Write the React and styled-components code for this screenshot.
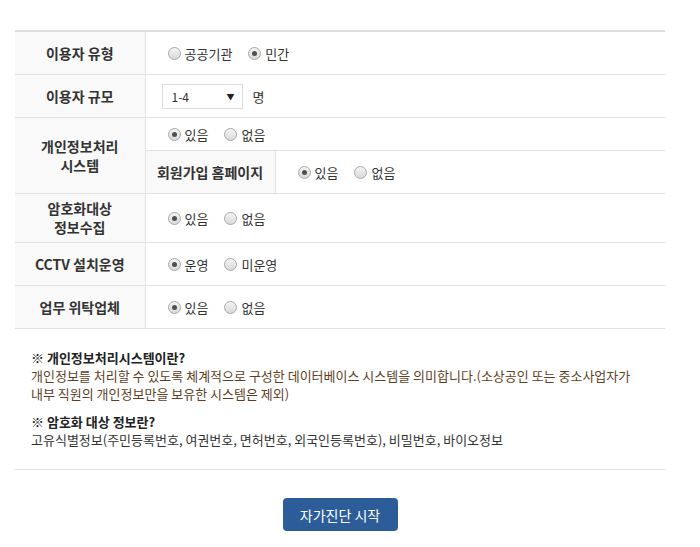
import React, { useState } from "react";
import styled, { createGlobalStyle } from "styled-components";

const GlobalStyle = createGlobalStyle`
  body {
    margin: 0;
    background: #fff;
    font-family: "Noto Sans CJK KR", "Noto Sans", sans-serif;
    color: #333;
  }
`;

const Wrap = styled.div`
  padding: 30px 35px 0 15px;
`;

const Table = styled.table`
  width: 100%;
  border-collapse: collapse;
  border-top: 2px solid #ddd;
  border-bottom: 1px solid #e2e2e2;

  tr + tr > td,
  tr + tr > th {
    border-top: 1px solid #e2e2e2;
  }
`;

const Label = styled.th`
  width: 130px;
  box-sizing: border-box;
  background: #f9f9f9;
  border-right: 1px solid #e2e2e2;
  font-size: 14px;
  font-weight: 700;
  line-height: 19px;
  color: #333;
  text-align: center;
  padding: 0 4px;
  white-space: nowrap;
  height: ${(p) => p.$h || 42}px;
`;

const Value = styled.td`
  padding: 0 0 0 ${(p) => p.$pad || 22}px;
  height: ${(p) => p.$h || 42}px;
  font-size: 13px;
  vertical-align: middle;
`;

const Options = styled.div`
  display: flex;
  align-items: center;
  gap: 16px;
`;

const Option = styled.label`
  display: inline-flex;
  align-items: center;
  gap: 4px;
  font-size: 13px;
  color: #333;
  cursor: pointer;
`;

const Radio = styled.input.attrs({ type: "radio" })`
  appearance: none;
  margin: 0;
  width: 13px;
  height: 13px;
  border-radius: 50%;
  border: 1px solid #a9a9a9;
  background: linear-gradient(#f4f4f4, #d9d9d9);
  box-sizing: border-box;
  display: grid;
  place-items: center;

  &:checked::after {
    content: "";
    width: 5px;
    height: 5px;
    border-radius: 50%;
    background: #505050;
  }
`;

const SelectBox = styled.div`
  display: flex;
  align-items: center;
  gap: 10px;
  font-size: 13px;
`;

const Select = styled.div`
  width: 81px;
  height: 25px;
  box-sizing: border-box;
  border: 1px solid #ddd;
  display: flex;
  align-items: center;
  justify-content: space-between;
  padding: 0 7px 0 9px;
  font-size: 12px;
  color: #333;

  span:last-child {
    font-size: 8px;
    color: #222;
  }
`;

const Notes = styled.div`
  padding: 20px 0 10px 16px;
  border-bottom: 1px solid #e2e2e2;
  font-size: 13px;
  line-height: 18px;
`;

const NoteTitle = styled.p`
  margin: 0;
  font-weight: 700;
  color: #222;
`;

const NoteText = styled.p`
  margin: 0 0 10px;
  color: ${(p) => p.$color || "#333"};
`;

const Footer = styled.div`
  display: flex;
  justify-content: center;
  padding-top: 28px;
`;

const Button = styled.button`
  width: 115px;
  height: 33px;
  border: 0;
  border-radius: 4px;
  background: #2c5d98;
  color: #fff;
  font-family: inherit;
  font-size: 14px;
  cursor: pointer;
`;

function RadioGroup({ name, options, initial }) {
  const [val, setVal] = useState(initial);
  return (
    <Options>
      {options.map((o) => (
        <Option key={o}>
          <Radio name={name} checked={val === o} onChange={() => setVal(o)} />
          {o}
        </Option>
      ))}
    </Options>
  );
}

export default function App() {
  return (
    <Wrap>
      <GlobalStyle />
      <Table>
        <tbody>
          <tr>
            <Label>이용자 유형</Label>
            <Value colSpan={2}>
              <RadioGroup name="type" options={["공공기관", "민간"]} initial="민간" />
            </Value>
          </tr>
          <tr>
            <Label>이용자 규모</Label>
            <Value colSpan={2} $pad={16}>
              <SelectBox>
                <Select>
                  <span>1-4</span>
                  <span>▼</span>
                </Select>
                명
              </SelectBox>
            </Value>
          </tr>
          <tr>
            <Label rowSpan={2}>
              개인정보처리
              <br />
              시스템
            </Label>
            <Value colSpan={2} $h={32}>
              <RadioGroup name="sys" options={["있음", "없음"]} initial="있음" />
            </Value>
          </tr>
          <tr>
            <Label $h={42}>회원가입 홈페이지</Label>
            <Value>
              <RadioGroup name="home" options={["있음", "없음"]} initial="있음" />
            </Value>
          </tr>
          <tr>
            <Label $h={48}>
              암호화대상
              <br />
              정보수집
            </Label>
            <Value colSpan={2} $h={48}>
              <RadioGroup name="enc" options={["있음", "없음"]} initial="있음" />
            </Value>
          </tr>
          <tr>
            <Label>CCTV 설치운영</Label>
            <Value colSpan={2}>
              <RadioGroup name="cctv" options={["운영", "미운영"]} initial="운영" />
            </Value>
          </tr>
          <tr>
            <Label>업무 위탁업체</Label>
            <Value colSpan={2}>
              <RadioGroup name="out" options={["있음", "없음"]} initial="있음" />
            </Value>
          </tr>
        </tbody>
      </Table>
      <Notes>
        <NoteTitle>※ 개인정보처리시스템이란?</NoteTitle>
        <NoteText $color="#5e3f1f">
          개인정보를 처리할 수 있도록 체계적으로 구성한 데이터베이스 시스템을 의미합니다.(소상공인 또는 중소사업자가
          <br />
          내부 직원의 개인정보만을 보유한 시스템은 제외)
        </NoteText>
        <NoteTitle>※ 암호화 대상 정보란?</NoteTitle>
        <NoteText>고유식별정보(주민등록번호, 여권번호, 면허번호, 외국인등록번호), 비밀번호, 바이오정보</NoteText>
      </Notes>
      <Footer>
        <Button>자가진단 시작</Button>
      </Footer>
    </Wrap>
  );
}
